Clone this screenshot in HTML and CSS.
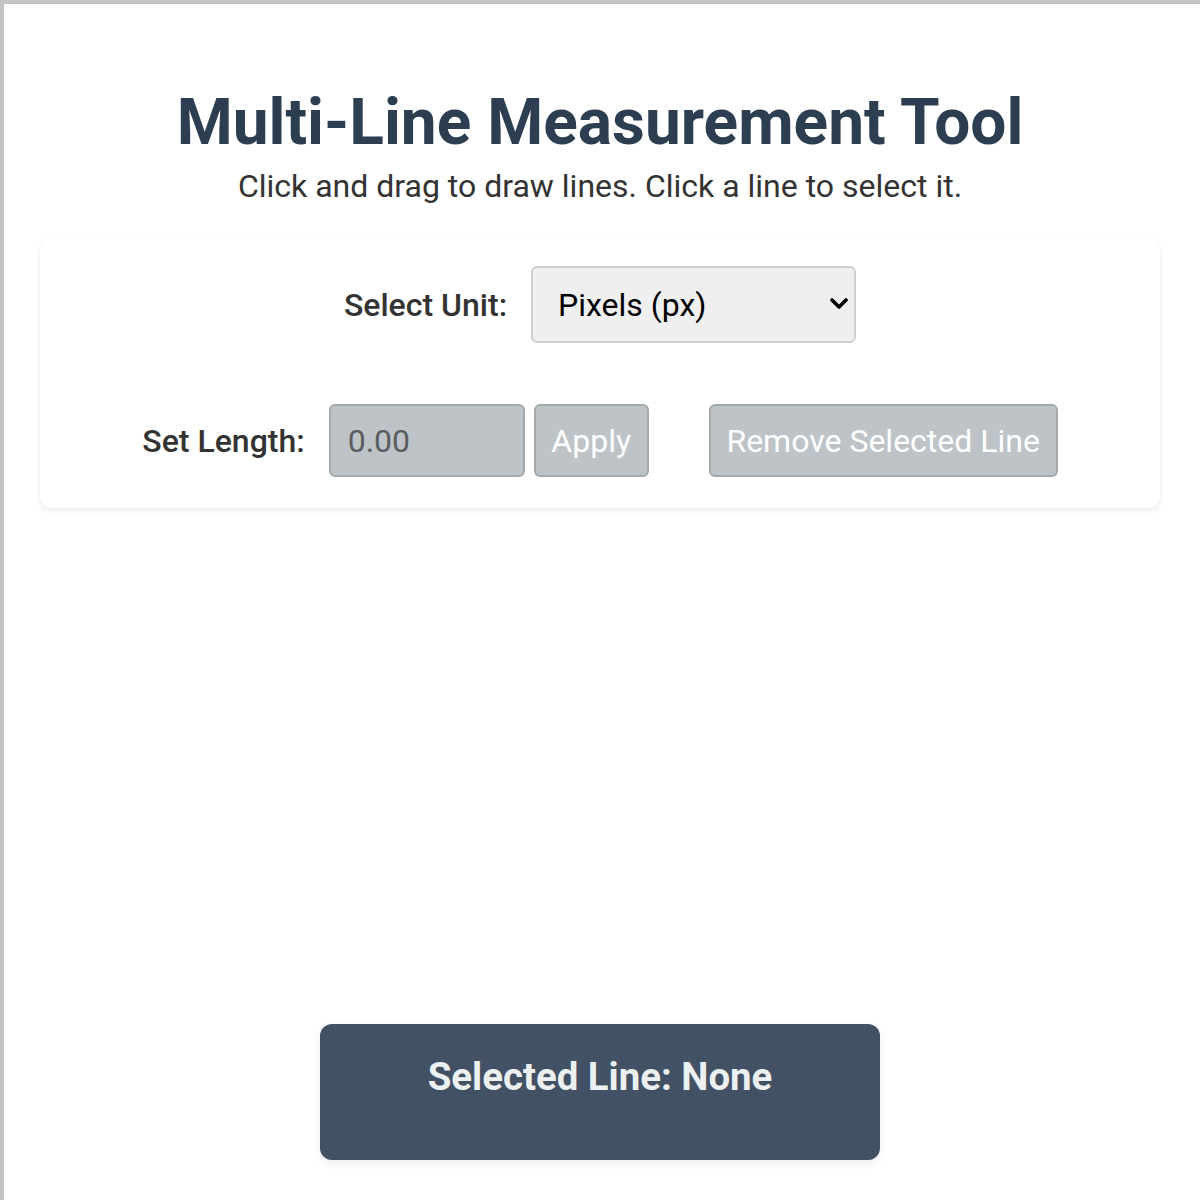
FILE: index.html
```html
<!DOCTYPE html>
<html lang="en">
<head>
    <meta charset="UTF-8">
    <meta name="viewport" content="width=device-width, initial-scale=1.0">
    <title>Multi-Line Measurement Tool</title>
    <link rel="stylesheet" href="styles.css">
</head>
<body>
    <div class="page">
        <h1 class="title">Multi-Line Measurement Tool</h1>
        <p class="subtitle">Click and drag to draw lines. Click a line to select it.</p>

        <div class="controls">
            <div class="control-row">
                <label for="unit">Select Unit:</label>
                <div class="select-wrap">
                    <select id="unit" class="unit-select">
                        <option>Pixels (px)</option>
                        <option>Centimeters (cm)</option>
                        <option>Inches (in)</option>
                    </select>
                    <svg class="chevron" width="18" height="12" viewBox="0 0 18 12">
                        <path d="M2 2 L9 9 L16 2" fill="none" stroke="#000" stroke-width="3.6" stroke-linecap="round" stroke-linejoin="round"/>
                    </svg>
                </div>
            </div>

            <div class="control-row">
                <label for="length">Set Length:</label>
                <input type="text" id="length" class="length-input" placeholder="0.00" disabled>
                <button type="button" class="btn apply-btn" disabled>Apply</button>
                <button type="button" class="btn remove-btn" disabled>Remove Selected Line</button>
            </div>
        </div>

        <div class="canvas-area"></div>

        <div class="info-panel">
            <div class="info-title">Selected Line: None</div>
        </div>
    </div>
</body>
</html>
```

FILE: styles.css
```css
* {
    margin: 0;
    padding: 0;
    box-sizing: border-box;
}

body {
    background-color: #fff;
    font-family: Roboto, "Liberation Sans", sans-serif;
    font-size: 32px;
    color: #333;
}

.page {
    height: 1200px;
    box-shadow: inset 4px 4px 0 #c4c4c4;
    display: flex;
    flex-direction: column;
    align-items: center;
}

.title {
    margin-top: 87px;
    font-size: 64px;
    font-weight: 700;
    line-height: 72px;
    color: #2c3e50;
}

.subtitle {
    margin-top: 7px;
    font-size: 32px;
    line-height: 40px;
    color: #333;
}

.controls {
    width: 1120px;
    margin-top: 32px;
    padding: 28px 0 31px;
    background-color: #fff;
    border-radius: 12px;
    box-shadow: 0 3px 6px rgba(0, 0, 0, 0.08);
    display: flex;
    flex-direction: column;
    align-items: center;
    gap: 61px;
}

.control-row {
    display: flex;
    align-items: center;
}

.control-row label {
    font-size: 32px;
    font-weight: 500;
    color: #333;
    margin-right: 24px;
}

.select-wrap {
    position: relative;
}

.unit-select {
    display: block;
    width: 325px;
    height: 77px;
    padding: 0 40px 0 25px;
    font-family: Roboto, "Liberation Sans", sans-serif;
    font-size: 32px;
    color: #000;
    background-color: #efefef;
    border: 2px solid #cfcfcf;
    border-radius: 6px;
    appearance: none;
    -webkit-appearance: none;
}

.chevron {
    position: absolute;
    right: 8px;
    top: 32px;
    pointer-events: none;
}

.length-input {
    width: 196px;
    height: 73px;
    padding: 0 17px;
    font-family: Roboto, "Liberation Sans", sans-serif;
    font-size: 32px;
    background-color: #bdc3c7;
    border: 2px solid #a3a8ab;
    border-radius: 6px;
}

.length-input::placeholder {
    color: #5a5d5f;
}

.btn {
    height: 73px;
    padding: 0 10px;
    font-family: Roboto, "Liberation Sans", sans-serif;
    font-size: 32px;
    color: #fff;
    white-space: nowrap;
    background-color: #bdc3c7;
    border: 2px solid #a3a8ab;
    border-radius: 6px;
}

.apply-btn {
    width: 115px;
    margin-left: 9px;
}

.remove-btn {
    width: 349px;
    margin-left: 60px;
}

.canvas-area {
    flex: 1;
    width: 100%;
}

.info-panel {
    width: 560px;
    height: 136px;
    margin-bottom: 40px;
    padding-top: 30px;
    background-color: #425164;
    border-radius: 12px;
    box-shadow: 0 3px 8px rgba(0, 0, 0, 0.08);
    text-align: center;
}

.info-title {
    font-size: 38.4px;
    font-weight: 700;
    line-height: 46px;
    color: #ecf0f1;
}
```
